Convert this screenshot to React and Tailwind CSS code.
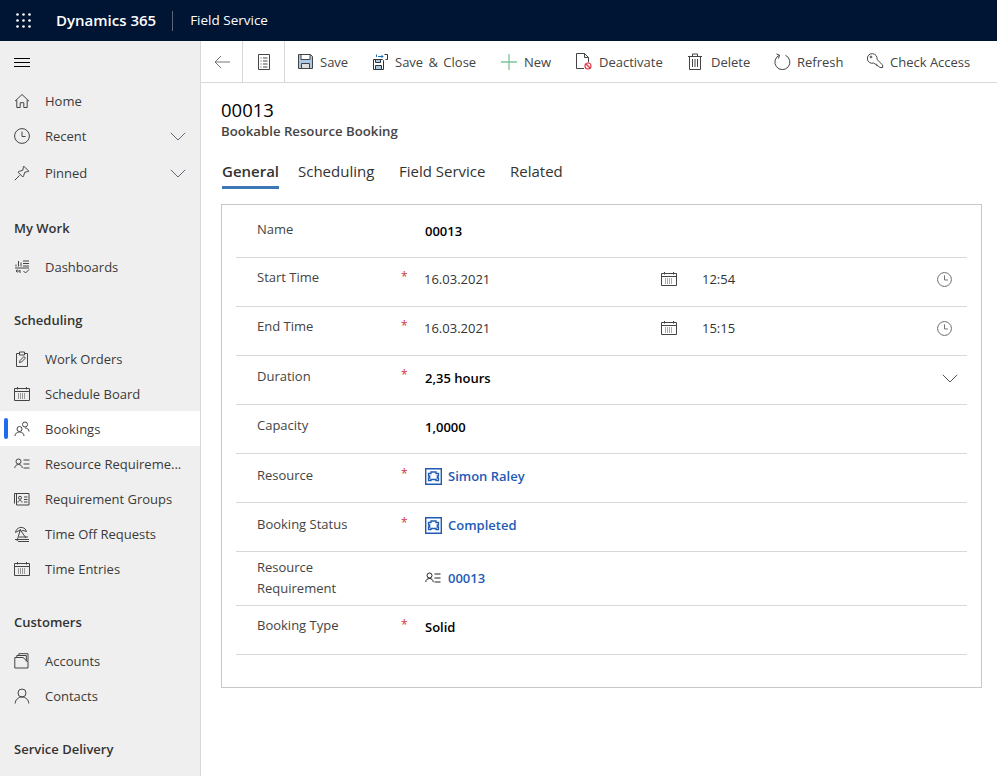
import React from "react";

const font = { fontFamily: '"Open Sans", "Noto Sans", sans-serif' };

function Ico({ size = 16, children, className = "", vb }) {
  return (
    <svg
      width={size}
      height={size}
      viewBox={vb || `0 0 ${size} ${size}`}
      fill="none"
      stroke="currentColor"
      strokeWidth="1"
      className={`shrink-0 ${className}`}
    >
      {children}
    </svg>
  );
}

const HomeIcon = () => (
  <Ico>
    <path d="M1 8.2 8 1.5l7 6.7M2.8 6.8v7.7h3.4V9.7h3.6v4.8h3.4V6.8" />
  </Ico>
);
const ClockIcon = ({ size = 16 }) => (
  <Ico size={size} vb="0 0 16 16">
    <circle cx="8" cy="8" r="7.4" />
    <path d="M8 3.6V8.5h3.6" />
  </Ico>
);
const PinIcon = () => (
  <Ico>
    <path d="M.8 15.2 5.6 10.4M9.8 1.2 14.8 6.2 13.8 6.6 10.8 7.2 9.6 10.8 8.8 12 4 7.2 5.2 6.4 8.8 5.2 9.4 2.2Z" />
  </Ico>
);
const Chevron = () => (
  <Ico>
    <path d="M.8 4.8 8 12l7.2-7.2" />
  </Ico>
);
const DashIcon = () => (
  <Ico>
    <path d="M2 5.5V7.5M4.5 2V7.5M7 3.5V7.5M9 2h6M9 4.5h6M9 7h6M1 9h14M2 12h4M2 12l1.5-1.5M2 12l1.5 1.5M6 11v3M9.5 12l2 2 3.5-3.5" />
  </Ico>
);
const CalIcon = ({ dots = "#444" }) => (
  <Ico>
    <path d="M.5 2.5h15v12H.5zM.5 5.5h15M3.5 1v2.5M12.5 1v2.5" />
    <path d="M4 8h8M4 10h8M4 12h8" stroke={dots} strokeDasharray="1 1" />
  </Ico>
);
const ClipIcon = () => (
  <Ico>
    <path d="M5 2.5H2.5v13h11v-13H11M5.5 1h5v3h-5zM5.5 11.5l.5-2 4-4 1.5 1.5-4 4z" />
  </Ico>
);
const PeopleIcon = () => (
  <Ico>
    <circle cx="5.5" cy="8" r="2.5" />
    <path d="M1 15c0-2.5 2-4 4.5-4s4.5 1.5 4.5 4" />
    <circle cx="11" cy="3.5" r="2.5" />
    <path d="M11 7c2.2 0 4 1.3 4 3.5" />
  </Ico>
);
const ReqIcon = ({ className = "" }) => (
  <Ico className={className}>
    <circle cx="4.5" cy="5.5" r="2.5" />
    <path d="M.8 12c0-2.2 1.600-3.500 3.700-3.500S8.200 9.800 8.200 12M9.500 4h6M9.500 8h6M9.500 12h6" />
  </Ico>
);
const GroupIcon = () => (
  <Ico>
    <path d="M.5 2.5v10M.5 2.5h14.500v11.500H2.500V2.500" />
    <circle cx="6" cy="6.8" r="1.5" />
    <path d="M4 11.5c0-1.500 1-2 2-2s2 .5 2 2M10 6h3.500M10 8.500h3.500M10 11h3.500" />
  </Ico>
);
const BeachIcon = () => (
  <Ico>
    <path d="M1.5 6.5C2 3 5 1 8 1.500c2.500.5 4 2 4.500 4L9 4.500 7.500 5 6 4.500 4 5ZM6.500 3 3 15M7 5l5 7M1 13.500h14M5 11h9M4 15.500h11" />
  </Ico>
);
const AccountIcon = () => (
  <Ico>
    <path d="M.8 4.5H9l5 4.500v6H.8zM2.800 4.500V2.500h9.500v6M4.800 2.500V.7h9.200v8" />
  </Ico>
);
const ContactIcon = () => (
  <Ico>
    <circle cx="8" cy="5" r="4" />
    <path d="M1.2 15.5c0-3.500 3-6.500 6.800-6.500s6.800 3 6.800 6.500" />
  </Ico>
);
const Puzzle = () => (
  <svg width="17" height="17" viewBox="0 0 17 17" fill="none" stroke="#1f5bb5" className="shrink-0">
    <path d="M.7.7h15.600v15.600H.7z" strokeWidth="1.4" />
    <path d="M3.500 5.500h2.500V4h5v1.500h2.500v2.500h-1.200v2h1.200v2.500H11v-1H6v1H3.500V10h1.200V8H3.500z" strokeWidth="1.3" />
  </svg>
);

function NavRow({ icon, label, chevron, active, className = "" }) {
  return (
    <div className={`relative flex h-[35px] items-center pl-[14px] pr-[14px] ${active ? "bg-white" : ""} ${className}`}>
      {active && <span className="absolute left-1 top-[7px] h-[21px] w-1 rounded-sm bg-[#1f6bf0]" />}
      <span className="flex w-[31px] text-[#444]">{icon}</span>
      <span className="flex-1 truncate pt-[3px] text-[13px] text-[#3b3a39]">{label}</span>
      {chevron && (
        <span className="text-[#5f6b7a]">
          <Chevron />
        </span>
      )}
    </div>
  );
}

function SectionHead({ children, className = "" }) {
  return <div className={`flex h-[57px] items-start pl-[14px] pt-[27px] text-[13px] font-semibold text-[#333] ${className}`}>{children}</div>;
}

function ToolBtn({ icon, label, width, gap = "gap-[7px]", pad = "pl-3", textClass = "" }) {
  return (
    <div className={`flex h-full items-center ${gap} ${pad} ${width}`}>
      {icon}
      <span className={`whitespace-nowrap pt-[2px] text-[13px] text-[#444] ${textClass}`}>{label}</span>
    </div>
  );
}

function Row({ label, required, height = "h-[49px]", labelPt = "pt-[9px]", valuePt = "pt-[11px]", starPt = "pt-[9px]", labelClass = "", children }) {
  return (
    <div className={`flex items-start border-b border-[#d8d8d8] ${height}`}>
      <div className={`w-[165px] shrink-0 pl-[21px] text-[13px] leading-[21px] text-[#444] ${labelPt}`}>
        <div className={labelClass}>{label}</div>
      </div>
      <div className={`w-[24px] shrink-0 text-[12px] leading-[20px] text-[#d13438] ${starPt}`}>{required ? "*" : ""}</div>
      <div className={`flex min-w-0 flex-1 items-center ${valuePt}`}>{children}</div>
    </div>
  );
}

function DateRow({ label, date, time }) {
  return (
    <Row label={label} required>
      <span className="-ml-px w-[236px] shrink-0 text-[13px] leading-[20px] text-[#333]">{date}</span>
      <span className="ml-px w-[41px] shrink-0 text-[#444]">
        <CalIcon dots="#7a3b8f" />
      </span>
      <span className="flex-1 text-[13px] leading-[20px] text-[#333]">{time}</span>
      <span className="mr-[15px] text-[#666]">
        <ClockIcon size={15} />
      </span>
    </Row>
  );
}

const Value = ({ children, className = "text-black" }) => (
  <span className={`text-[13px] font-semibold leading-[20px] ${className}`}>{children}</span>
);

export default function App() {
  return (
    <div className="flex h-[776px] w-[997px] flex-col overflow-hidden bg-white" style={font}>
      {/* top bar */}
      <header className="flex h-[41px] shrink-0 items-center bg-[#001433] text-white">
        <svg width="16" height="16" viewBox="0 0 16 16" fill="#fff" className="ml-4">
          {[1.5, 7.5, 13.5].map((y) =>
            [1.5, 7.5, 13.5].map((x) => <circle key={`${x}-${y}`} cx={x} cy={y} r="1.3" />)
          )}
        </svg>
        <span className="ml-[24px] text-[15px] font-semibold">Dynamics 365</span>
        <span className="ml-4 h-5 w-px bg-[#5a6578]" />
        <span className="ml-[17px] text-[13.5px]">Field Service</span>
      </header>

      <div className="flex min-h-0 flex-1">
        {/* sidebar */}
        <aside className="w-[201px] shrink-0 border-r border-[#d8d8d8] bg-[#efefef]">
          <div className="flex h-[42px] items-center pl-[14px] text-black">
            <svg width="16" height="11" viewBox="0 0 16 11" stroke="currentColor">
              <path d="M0 1.5h16M0 5.5h16M0 9.5h16" />
            </svg>
          </div>
          <NavRow icon={<HomeIcon />} label="Home" />
          <NavRow icon={<ClockIcon />} label="Recent" chevron />
          <NavRow icon={<PinIcon />} label="Pinned" chevron className="mt-[2px]" />
          <SectionHead className="!h-[59px] !pt-[29px]">My Work</SectionHead>
          <NavRow icon={<DashIcon />} label="Dashboards" />
          <SectionHead>Scheduling</SectionHead>
          <NavRow icon={<ClipIcon />} label="Work Orders" />
          <NavRow icon={<CalIcon />} label="Schedule Board" />
          <NavRow icon={<PeopleIcon />} label="Bookings" active />
          <NavRow icon={<ReqIcon />} label="Resource Requireme..." />
          <NavRow icon={<GroupIcon />} label="Requirement Groups" />
          <NavRow icon={<BeachIcon />} label="Time Off Requests" />
          <NavRow icon={<CalIcon />} label="Time Entries" />
          <SectionHead>Customers</SectionHead>
          <NavRow icon={<AccountIcon />} label="Accounts" />
          <NavRow icon={<ContactIcon />} label="Contacts" />
          <SectionHead>Service Delivery</SectionHead>
        </aside>

        <main className="min-w-0 flex-1">
          {/* command bar */}
          <div className="flex h-[42px] items-stretch border-b border-[#d8d8d8]">
            <div className="flex w-[42px] items-center justify-center border-r border-[#d8d8d8] text-[#777]">
              <svg width="16" height="14" viewBox="0 0 16 14" fill="none" stroke="currentColor">
                <path d="M7 1 1 7l6 6M1 7h15" />
              </svg>
            </div>
            <div className="flex w-[42px] items-center justify-center border-r border-[#d8d8d8] text-[#444]">
              <svg width="12" height="16" viewBox="0 0 12 16" fill="none" stroke="currentColor">
                <path d="M.5.5h11v15H.5zM2.500 4h1M5 4h4.500M2.500 7h1M5 7h4.500M2.500 10h1M5 10h4.500M2.500 13h1M5 13h4.500" />
              </svg>
            </div>
            <ToolBtn
              width="w-[76px]"
              pad="pl-[13px]"
              icon={
                <svg width="15" height="15" viewBox="0 0 15 15" fill="none" className="shrink-0">
                  <path d="M.5.5h12l2 2v12H.5z" fill="#a9c9e6" stroke="#444" />
                  <path d="M3 .5h9v5H3z" fill="#fff" stroke="#444" />
                  <path d="M3.500 9.500h8v5h-8z" fill="#ddd" stroke="#444" />
                </svg>
              }
              label="Save"
            />
            <ToolBtn
              width="w-[128px]"
              pad="pl-[12px]"
              textClass="[word-spacing:2px]"
              icon={
                <svg width="15" height="16" viewBox="0 0 15 16" fill="none" className="shrink-0">
                  <path d="M.5 5.500h9l1 1v9H.5z" stroke="#333" />
                  <path d="M2.500 5.500h5v3h-5zM2.500 11.500h6v4h-6z" fill="#a9c9e6" stroke="#333" />
                  <path d="M3.500 3V.5M5 2.500h5M8.500 1l1.500 1.500L8.500 4" stroke="#1f6fb5" />
                  <path d="M11.500.5h3v5h-2" stroke="#333" />
                </svg>
              }
              label="Save & Close"
            />
            <ToolBtn
              width="w-[75px]"
              icon={
                <svg width="16" height="16" viewBox="0 0 16 16" stroke="#7cc49a" strokeWidth="1.3" className="shrink-0">
                  <path d="M8 0v16M0 8h16" />
                </svg>
              }
              label="New"
            />
            <ToolBtn
              width="w-[112px]"
              icon={
                <svg width="16" height="17" viewBox="0 0 16 17" fill="none" className="shrink-0">
                  <path d="M8 15.500H.5V.5h8l4 4v5M8.500.5v4h4" stroke="#444" />
                  <circle cx="12" cy="13" r="3" stroke="#e0394a" strokeWidth="1.2" />
                  <path d="m10 11 4 4" stroke="#e0394a" strokeWidth="1.2" />
                </svg>
              }
              label="Deactivate"
            />
            <ToolBtn
              width="w-[86px]"
              gap="gap-[9px]"
              icon={
                <svg width="14" height="17" viewBox="0 0 14 17" fill="none" stroke="#444" className="shrink-0">
                  <path d="M0 3.500h14M4.500 3.500v-2.500h5v2.500M1.500 3.500v13h11v-13M4.500 6v8M7 6v8M9.500 6v8" />
                </svg>
              }
              label="Delete"
            />
            <ToolBtn
              width="w-[93px]"
              gap="gap-[6px]"
              icon={
                <svg width="17" height="17" viewBox="0 0 17 17" fill="none" stroke="#444" className="shrink-0">
                  <path d="M5.500 2.200A7.500 7.500 0 1 0 11.500 2.300M2.500 1 5.500 2.200 4.500 5.500" />
                </svg>
              }
              label="Refresh"
            />
            <ToolBtn
              width="w-[120px]"
              gap="gap-[6px]"
              icon={
                <svg width="17" height="17" viewBox="0 0 17 17" fill="none" stroke="#444" className="shrink-0">
                  <path d="M5.500.7a4.800 4.800 0 1 0 1.200 9.300l1.500 1.200h1.500v1.500h1.500l1.500 1.800h3V12L10 6.500A4.800 4.800 0 0 0 5.500.7z" />
                  <circle cx="4" cy="4" r=".9" />
                </svg>
              }
              label="Check Access"
            />
          </div>

          <div className="pl-5 pr-[15px]">
            <h1 className="mt-[14px] text-[18.5px] font-normal leading-[25px] text-black">00013</h1>
            <p className="text-[13.2px] font-semibold leading-[18px] text-[#444]">Bookable Resource Booking</p>

            {/* tabs */}
            <div className="mt-[19px] flex h-[30px] items-start gap-[19px] pl-px text-[15px] leading-[24px] text-[#333]">
              <span className="h-full w-[57px] border-b-[3px] border-[#3b78b5] font-semibold">General</span>
              <span className="w-[82px]">Scheduling</span>
              <span className="w-[92px]">Field Service</span>
              <span>Related</span>
            </div>

            {/* form card */}
            <div className="mt-[15px] h-[484px] border border-[#c8c8c8] px-[14px]">
              <Row label="Name" height="h-[53px]" labelPt="pt-[14px]" valuePt="pt-[16px]">
                <Value>00013</Value>
              </Row>
              <DateRow label="Start Time" date="16.03.2021" time="12:54" />
              <DateRow label="End Time" date="16.03.2021" time="15:15" />
              <Row label="Duration" required labelPt="pt-[10px]" valuePt="pt-[12px]">
                <span className="flex flex-1">
                  <Value>2,35 hours</Value>
                </span>
                <span className="mr-[9px] flex text-[#555]">
                  <Chevron />
                </span>
              </Row>
              <Row label="Capacity" labelPt="pt-[10px]" valuePt="pt-[12px]">
                <Value>1,0000</Value>
              </Row>
              <Row label="Resource" required labelPt="pt-[11px]" valuePt="pt-[12px]" starPt="pt-[10px]">
                <span className="flex items-center gap-[6px]">
                  <Puzzle />
                  <Value className="text-[#1f5bb5]">Simon Raley</Value>
                </span>
              </Row>
              <Row label="Booking Status" required labelPt="pt-[11px]" valuePt="pt-[12px]" starPt="pt-[10px]">
                <span className="flex items-center gap-[6px]">
                  <Puzzle />
                  <Value className="text-[#1f5bb5]">Completed</Value>
                </span>
              </Row>
              <Row label="Resource Requirement" height="h-[54px]" labelPt="pt-[5px]" valuePt="pt-[16px]" labelClass="max-w-[100px]">
                <span className="flex items-center gap-[7px]">
                  <span className="flex text-[#222]">
                    <ReqIcon />
                  </span>
                  <Value className="text-[#1f5bb5]">00013</Value>
                </span>
              </Row>
              <Row label="Booking Type" required>
                <Value>Solid</Value>
              </Row>
            </div>
          </div>
        </main>
      </div>
    </div>
  );
}
